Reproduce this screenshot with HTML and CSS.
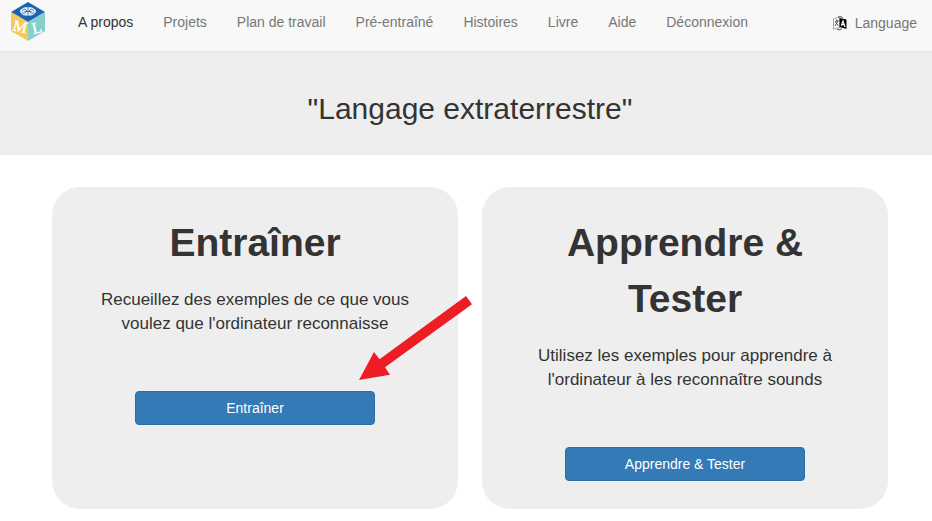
FILE: index.html
```html
<!DOCTYPE html>
<html lang="fr">
<head>
<meta charset="utf-8">
<meta name="viewport" content="width=device-width, initial-scale=1">
<title>Langage extraterrestre</title>
<link rel="stylesheet" href="styles.css">
</head>
<body>
<header class="navbar">
  <a class="brand" href="#" aria-label="Machine Learning for Kids">
    <svg width="34" height="39" viewBox="0 0 34 39" aria-hidden="true">
      <path fill="#1c64b0" d="M17 0 34 10 17 20 0 10z"/>
      <path fill="#f5c952" d="M0 10 17 20V39L0 29z"/>
      <path fill="#86cfcb" d="M34 10 17 20V39L34 29z"/>
      <path fill="#e4eff8" d="M9 9q0-2 2.500-2.500Q13 5 15.500 5.300q1.500-.8 3 0Q21 5 22.500 6.500 25 7 25 9t-2 3q-1.500 1.700-4 1.500-2 .8-4 0-3 .2-4-1.500Q9 11 9 9z"/>
      <path fill="none" stroke="#1c64b0" stroke-width=".8" d="M17 5v9M11 8.500l3-1.500 2 2-3 2.500-2-1M23 8.500l-3-1.500-2 2 3 2.500 2-1M13.500 9.500h7"/>
      <text class="logo-letter" text-anchor="middle" x="9" y="30" transform="rotate(13 9 25)">M</text>
      <text class="logo-letter" text-anchor="middle" x="26" y="31" transform="rotate(-13 26 26)">L</text>
    </svg>
  </a>
  <nav class="menu">
    <a class="active" href="#">A propos</a>
    <a href="#">Projets</a>
    <a href="#">Plan de travail</a>
    <a href="#">Pré-entraîné</a>
    <a href="#">Histoires</a>
    <a href="#">Livre</a>
    <a href="#">Aide</a>
    <a href="#">Déconnexion</a>
  </nav>
  <a class="language" href="#">
    <svg width="14" height="16" viewBox="0 0 14 16" aria-hidden="true">
      <path fill="#fff" stroke="#888" stroke-width=".8" d="M.5 4 7 2v10.500L.5 14z"/>
      <path fill="#000" d="M6.500 3 13.500 4.500V14L6.500 12z"/>
      <path fill="none" stroke="#444" stroke-width=".9" d="M2 6.500 5.500 5.500M3.700 4.700v1.500M5 6 2 11M2.500 7l3 4M4 14.500q3 1 5-.8M5 2q3-1.500 5 1"/>
      <path fill="none" stroke="#fff" stroke-width="1.200" d="M8.300 10.800 10 6 12 12M9 9.300l2.500.7"/>
    </svg>
    <span>Language</span>
  </a>
</header>

<div class="banner"><h1>"Langage extraterrestre"</h1></div>

<main class="cards">
  <section class="card">
    <h2>Entraîner</h2>
    <p>Recueillez des exemples de ce que vous voulez que l'ordinateur reconnaisse</p>
    <button type="button">Entraîner</button>
    <svg class="arrow" width="113" height="84" viewBox="0 0 113 84" aria-hidden="true">
      <path fill="#ee1c25" d="M0 84 15 56 20.500 63.300 107 0 113 8.300 26 71.300 31 78.700z"/>
    </svg>
  </section>
  <section class="card">
    <h2>Apprendre &amp; Tester</h2>
    <p>Utilisez les exemples pour apprendre à l'ordinateur à les reconnaître sounds</p>
    <button type="button">Apprendre &amp; Tester</button>
  </section>
</main>
</body>
</html>
```
FILE: styles.css
```css
* {
  box-sizing: border-box;
}

body {
  margin: 0;
  background: #fff;
  color: #333;
  font-family: "Liberation Sans", Arial, sans-serif;
  font-size: 14px;
  line-height: 20px;
}

.navbar {
  display: flex;
  align-items: center;
  min-height: 52px;
  padding: 0 15px 8px 11px;
  background: #f8f8f8;
  border-bottom: 1px solid #e7e7e7;
}

.navbar a {
  color: #777;
  text-decoration: none;
}

.brand {
  display: flex;
  margin-right: 33px;
}

.logo-letter {
  fill: #fff;
  stroke: #fff;
  stroke-width: .4px;
  font-family: "Liberation Serif", serif;
  font-size: 16px;
}

.menu {
  display: flex;
  flex: 1;
  gap: 30px;
  white-space: nowrap;
}

.navbar .active {
  color: #333;
}

.language {
  display: flex;
  align-items: center;
  gap: 8px;
  padding-top: 2px;
}

.banner {
  padding: 36px 44px 25px 52px;
  background: #eee;
  text-align: center;
}

.banner h1 {
  margin: 0;
  font-size: 30px;
  font-weight: normal;
  line-height: 42px;
}

.cards {
  display: grid;
  grid-template-columns: 1fr 1fr;
  gap: 24px;
  padding: 32px 44px 12px 52px;
}

.card {
  position: relative;
  padding: 28px 48px;
  border-radius: 28px;
  background: #eee;
  text-align: center;
}

.card h2 {
  margin: 0 0 17px;
  font-size: 39px;
  line-height: 56px;
}

.card p {
  margin: 0 0 55px;
  font-size: 17px;
  line-height: 24px;
}

.card button {
  width: 240px;
  max-width: 100%;
  height: 34px;
  border: 1px solid #2e6da4;
  border-radius: 4px;
  background: #337ab7;
  color: #fff;
  font: inherit;
  cursor: pointer;
  vertical-align: top;
}

.arrow {
  position: absolute;
  top: 109px;
  right: -14px;
}
```
